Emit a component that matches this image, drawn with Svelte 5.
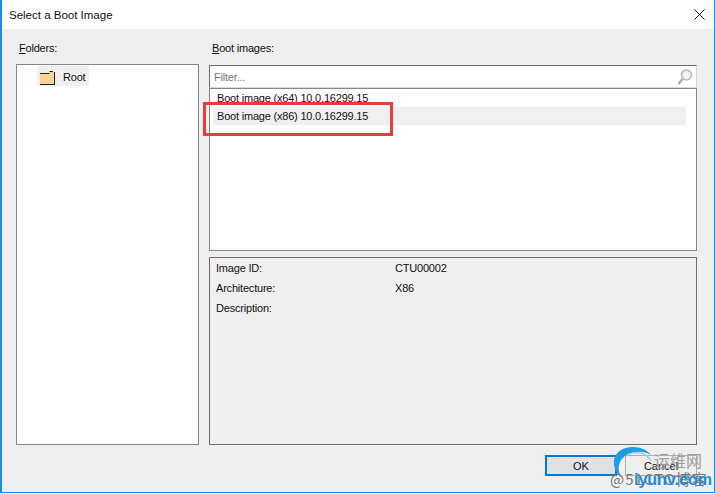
<script>
  const details = [
    ['Image ID:', 'CTU00002'],
    ['Architecture:', 'X86'],
    ['Description:', '']
  ];
</script>

<div class="window">
  <header class="titlebar">
    <span>Select a Boot Image</span>
    <svg class="close" width="11" height="11" viewBox="0 0 11 11"><path d="M0.5 0.5 10.5 10.5M10.5 0.5 0.5 10.5" stroke="#111" stroke-width="1" fill="none"/></svg>
  </header>
  <main class="body">
    <div class="columns">
      <section class="left">
        <div class="label"><u>F</u>olders:</div>
        <div class="tree">
          <div class="node">
            <svg class="folder" width="15" height="14" viewBox="0 0 15 14">
              <path d="M0 2H9.500V0.500H12V1H15V14H0Z" fill="#fbd28f"/>
              <path d="M0 13.500H15M14.500 1V14M9.500 0.500H13M0 2.500H9.500" stroke="#222" stroke-width="1" fill="none"/>
              <path d="M1 3.500H14" stroke="#e9e2b0" stroke-width="1"/>
            </svg>
            <span class="root-name">Root</span>
          </div>
        </div>
      </section>
      <section class="right">
        <div class="label"><u>B</u>oot images:</div>
        <div class="filter">
          <span>Filter...</span>
          <svg class="search" width="16" height="18" viewBox="0 0 16 18">
            <circle cx="9.500" cy="7" r="5" fill="#f2f2f2" stroke="#b5b5b5" stroke-width="1.400"/>
            <path d="M5.500 11 1.500 16" stroke="#a8a8a8" stroke-width="2.400" fill="none"/>
          </svg>
        </div>
        <div class="list">
          <div class="row">Boot image (x64) 10.0.16299.15</div>
          <div class="row selected">Boot image (x86) 10.0.16299.15</div>
        </div>
        <div class="details">
          {#each details as [k, v]}
            <div class="detail"><span class="key">{k}</span><span>{v}</span></div>
          {/each}
        </div>
      </section>
    </div>
    <footer class="buttons">
      <button class="ok">OK</button>
      <button class="cancel">Cancel</button>
    </footer>
  </main>

  <div class="highlight"></div>

  <div class="watermark">
    <svg width="70" height="50" viewBox="0 0 70 50">
      <path d="M14 38C1 28 3 7 25 7C33 7 39 10 43 15C36 11 28 11 20 14C10 19 8 30 14 38Z" fill="#1f9be8"/>
      <path d="M19 15C28 10 39 13 43 21" stroke="#8fcdf2" stroke-width="1.500" fill="none"/>
    </svg>
    <span class="wm-cn">运维网</span>
    <span class="wm-blog">@51CTO博客</span>
    <span class="wm-site">iyunv.com</span>
  </div>
</div>

<style>
  :global(body) { margin: 0; }
  .window {
    position: relative;
    box-sizing: border-box;
    width: 715px;
    height: 493px;
    overflow: hidden;
    display: flex;
    flex-direction: column;
    background: #efefef;
    border-left: 2px solid #1a8ae6;
    border-right: 1px solid #1a8ae6;
    border-bottom: 1px solid #1a8ae6;
    font-family: "Liberation Sans", Arial, sans-serif;
    font-size: 11px;
    letter-spacing: -0.2px;
    color: #111;
  }
  .titlebar {
    height: 29px;
    flex: none;
    background: #fff;
    display: flex;
    align-items: center;
    justify-content: space-between;
    padding: 0 9px 0 7px;
    font-size: 11.5px;
    letter-spacing: 0;
  }
  .close { margin-top: -1px; }
  .body {
    flex: 1;
    display: flex;
    flex-direction: column;
    padding: 11px 17px 15px 14px;
  }
  .columns {
    display: flex;
    gap: 10px;
    height: 405px;
  }
  .left { width: 183px; display: flex; flex-direction: column; }
  .right { flex: 1; display: flex; flex-direction: column; }
  .label { height: 24px; line-height: 16px; padding-left: 3px; }
  .tree {
    flex: 1;
    background: #fff;
    border: 1px solid #828790;
    padding: 1px 0 0 20px;
  }
  .node {
    box-sizing: border-box;
    width: 52px;
    height: 20px;
    background: #f0f0f0;
    display: flex;
    align-items: center;
    gap: 8px;
    padding-left: 3px;
  }
  .folder { margin-top: 4px; }
  .root-name { margin-top: 2px; }
  .filter {
    height: 23px;
    margin-top: 1px;
    box-sizing: border-box;
    background: #fff;
    border: 1px solid #d9d9d9;
    border-top: 1px solid #6d6d6d;
    border-left: 1px solid #6d6d6d;
    display: flex;
    align-items: center;
    justify-content: space-between;
    padding: 0 3px 0 4px;
    color: #777;
  }
  .list {
    height: 163px;
    box-sizing: border-box;
    background: #fff;
    border: 1px solid #828790;
    padding: 0 10px 0 3px;
  }
  .row { height: 18px; line-height: 18px; padding-left: 4px; }
  .selected { background: #f0f0f0; }
  .details {
    flex: 1;
    margin-top: 6px;
    border: 1px solid #6d6d6d;
    padding: 0 0 0 6px;
  }
  .detail { display: flex; height: 20px; line-height: 20px; }
  .key { width: 179px; }
  .buttons {
    display: flex;
    justify-content: flex-end;
    gap: 8px;
    margin-top: 10px;
  }
  button {
    box-sizing: border-box;
    width: 72px;
    height: 21px;
    padding: 0;
    font: inherit;
    letter-spacing: 0;
    color: #111;
    background: #e1e1e1;
    border: 1px solid #adadad;
  }
  .ok { border: 2px solid #0078d7; }
  .cancel { background: #eeeeee; }
  .highlight {
    position: absolute;
    left: 201px;
    top: 102px;
    width: 190px;
    height: 34px;
    box-sizing: border-box;
    border: 3px solid #ef3a3a;
  }
  .watermark {
    position: absolute;
    left: 598px;
    top: 440px;
    width: 114px;
    height: 52px;
    letter-spacing: 0;
  }
  .watermark svg { position: absolute; left: 8px; top: 0; }
  .wm-cn { position: absolute; left: 54px; top: 11px; font: 16px/18px "Noto Sans CJK SC", sans-serif; color: #a0a0a0; }
  .wm-blog { position: absolute; left: 10px; top: 30px; font: 15px/17px "Noto Sans CJK SC", sans-serif; letter-spacing: 1px; color: #777; white-space: nowrap; }
  .wm-site { position: absolute; left: 34px; top: 31px; font: bold 16px/18px "Liberation Sans", sans-serif; color: #1b8fdc; }
</style>
